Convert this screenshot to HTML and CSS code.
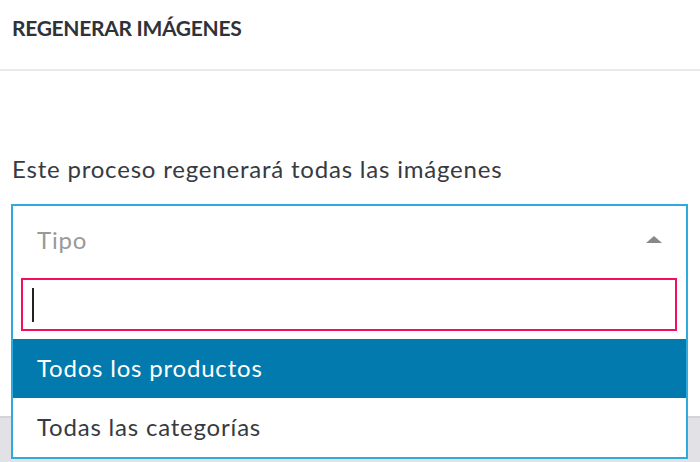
FILE: index.html
```html
<!DOCTYPE html>
<html lang="es">
<head>
    <meta charset="UTF-8">
    <title>Regenerar imágenes</title>
    <link rel="stylesheet" href="styles.css">
</head>
<body>
    <div class="panel">
        <h3 class="panel-heading">Regenerar imágenes</h3>

        <div class="panel-body">
            <p class="help">Este proceso regenerará todas las imágenes</p>

            <div class="select-box open">
                <div class="select-current">
                    <span class="placeholder">Tipo</span>
                    <span class="arrow"></span>
                </div>
                <div class="select-dropdown">
                    <div class="search">
                        <div class="search-field"><span class="caret"></span></div>
                    </div>
                    <ul class="options">
                        <li class="option highlighted">Todos los productos</li>
                        <li class="option">Todas las categorías</li>
                    </ul>
                </div>
            </div>
        </div>

        <div class="panel-footer"></div>
    </div>
</body>
</html>
```

FILE: styles.css
```css
*{
    margin: 0px;
    padding: 0px;
    box-sizing: border-box;
}

body{
    font-family: Lato, "Open Sans", sans-serif;
    color: #363a41;
    background: #fff;
    overflow: hidden;
}

.panel{
    height: 462px;
    display: flex;
    flex-direction: column;
}

.panel-heading{
    height: 71px;
    padding: 15px 12px 0;
    font-size: 21px;
    font-weight: 700;
    text-transform: uppercase;
    letter-spacing: -0.3px;
    color: #2f3238;
    border-bottom: 2px solid #eaeaea;
}

.panel-body{
    padding: 83px 12px 0 11px;
    height: 345px;
}

.help{
    font-size: 24px;
    line-height: 30px;
    letter-spacing: 0.8px;
    padding-left: 1px;
    color: #363a41;
    margin-bottom: 20px;
}

.select-box{
    position: relative;
    width: 677px;
}

.select-current{
    height: 72px;
    border: 2px solid #2eaadc;
    border-bottom: none;
    display: flex;
    align-items: center;
    justify-content: space-between;
    padding: 0 24px 0 24px;
    background: #fff;
}

.placeholder{
    font-size: 24px;
    letter-spacing: 0.8px;
    color: #999;
    margin-top: -4px;
}

.arrow{
    width: 0;
    height: 0;
    border-left: 8px solid transparent;
    border-right: 8px solid transparent;
    border-bottom: 7px solid #888;
    margin-top: -4px;
}

.select-dropdown{
    position: absolute;
    top: 72px;
    left: 0;
    right: 0;
    background: #fff;
    border: 2px solid #2eaadc;
    border-top: none;
    z-index: 2;
}

.search{
    padding: 2px 9px 8px 8px;
}

.search-field{
    height: 53px;
    border: 2px solid #f2105a;
    padding: 8px 0 0 9px;
}

.caret{
    display: block;
    width: 2px;
    height: 34px;
    background: #222;
}

.options{
    list-style: none;
}

.option{
    height: 59px;
    line-height: 58px;
    padding-left: 24px;
    font-size: 24px;
    letter-spacing: 0.8px;
    color: #363a41;
}

.option.highlighted{
    background: #027aad;
    color: #fff;
}

.panel-footer{
    flex: 1;
    background: #e1e1e6;
    border-top: 2px solid #d4d4da;
}
```
